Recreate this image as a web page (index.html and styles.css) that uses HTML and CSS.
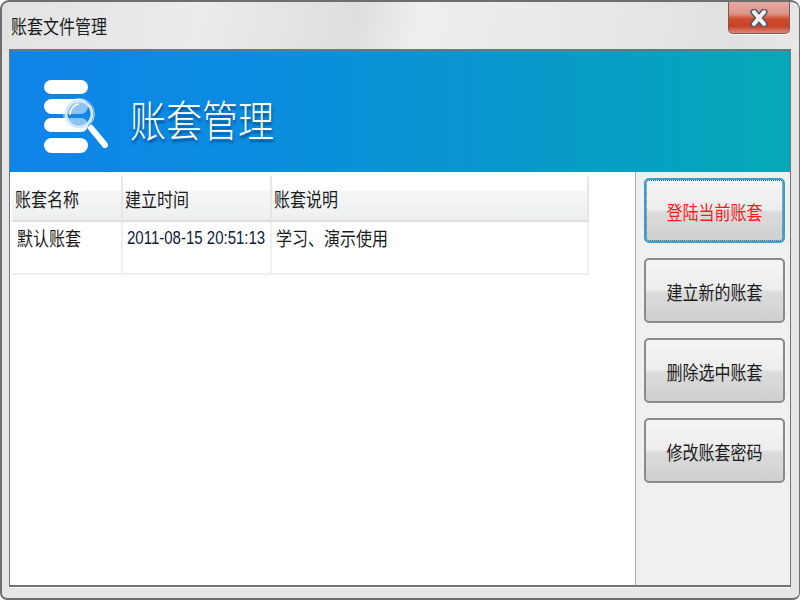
FILE: index.html
```html
<!DOCTYPE html>
<html lang="zh-CN">
<head>
<meta charset="utf-8">
<title>账套文件管理</title>
<link rel="stylesheet" href="styles.css">
</head>
<body>
<div class="window">
  <div class="titlebar">
    <span class="title t">账套文件管理</span>
    <div class="close">
      <svg width="20" height="18" viewBox="0 0 20 18" aria-hidden="true">
        <path class="x-out" d="M5 3 L15 15 M15 3 L5 15"/>
        <path class="x-in" d="M5 3 L15 15 M15 3 L5 15"/>
      </svg>
    </div>
  </div>
  <div class="client">
    <div class="banner">
      <svg class="logo" width="68" height="76" viewBox="0 0 68 76" aria-hidden="true">
        <rect class="bar" x="0" y="1" width="44" height="14" rx="7"/>
        <rect class="bar" x="0" y="20" width="44" height="15" rx="7.5"/>
        <rect class="bar" x="0" y="39" width="44" height="14" rx="7"/>
        <rect class="bar" x="0" y="59" width="44" height="15" rx="7.5"/>
        <circle class="lens-halo" cx="35" cy="35" r="15.5"/>
        <circle class="lens-fill" cx="35" cy="35" r="13"/>
        <circle class="lens-ring" cx="35" cy="35" r="13"/>
        <path class="lens-arc" d="M26 36 A9.5 11 0 0 1 35 25"/>
        <path class="handle" d="M47 49 L61 66"/>
      </svg>
      <h1 class="banner-title t">账套管理</h1>
    </div>
    <div class="body">
      <div class="list">
        <div class="grid">
          <div class="head"><span class="t">账套名称</span></div>
          <div class="head"><span class="t">建立时间</span></div>
          <div class="head"><span class="t">账套说明</span></div>
          <div class="cell"><span class="t">默认账套</span></div>
          <div class="cell date"><span class="t">2011-08-15 20:51:13</span></div>
          <div class="cell"><span class="t">学习、演示使用</span></div>
        </div>
      </div>
      <div class="side">
        <button class="btn focus"><span class="t">登陆当前账套</span></button>
        <button class="btn"><span class="t">建立新的账套</span></button>
        <button class="btn"><span class="t">删除选中账套</span></button>
        <button class="btn"><span class="t">修改账套密码</span></button>
      </div>
    </div>
  </div>
</div>
</body>
</html>
```
FILE: styles.css
```css
* { box-sizing: border-box; }
html, body { margin: 0; padding: 0; background: #fff; }
body { font-family: "Noto Sans CJK SC", "Liberation Sans", sans-serif; color: #1c1c1c; }

/* The reference is stretched vertically; text follows that stretch. */
.t { display: inline-block; transform: scaleY(1.2); transform-origin: center; }

.window {
  width: 800px;
  height: 600px;
  display: flex;
  flex-direction: column;
  padding: 0 8px 11px 7px;
  border: 2px solid #6e6e6e;
  border-width: 2px 1px 2px 2px;
  border-radius: 9px 9px 7px 7px;
  background:
    linear-gradient(100deg, #e2e2e2 0%, #ececec 25%, #dedede 44%, #eeeeee 52%, #e8e8e8 75%, #e0e0e0 92%, #e8e8e8 100%) top / 100% 50px no-repeat,
    #e6e6e6;
  overflow: hidden;
}

.titlebar {
  height: 47px;
  flex: none;
  display: flex;
  justify-content: space-between;
  align-items: flex-start;
}
.title {
  font-size: 16px;
  line-height: 24px;
  margin-top: 12px;
  margin-left: 2px;
  color: #1c1c1c;
}
.close {
  width: 62px;
  height: 32px;
  margin-right: 1px;
  display: flex;
  align-items: center;
  justify-content: center;
  background: linear-gradient(#e9aaa4 0%, #dc9388 38%, #cf4a2a 55%, #c9422a 78%, #d98a78 100%);
  border: 1px solid #7a5a58;
  border-top: none;
  border-radius: 0 0 5px 5px;
  box-shadow: 0 1px 0 #f6f6f6;
}
.x-out { fill: none; stroke: #4f5a6c; stroke-width: 7; stroke-linecap: round; }
.x-in { fill: none; stroke: #f2f2f2; stroke-width: 4; stroke-linecap: round; }

.client {
  flex: 1;
  min-height: 0;
  display: flex;
  flex-direction: column;
  border: 1px solid #6f7678;
  border-width: 2px 1px 2px 1px;
  background: #f0f0f0;
  box-shadow: 0 1px 0 #fafafa;
}

.banner {
  height: 121px;
  flex: none;
  display: flex;
  align-items: center;
  padding-left: 34px;
  gap: 18px;
  background: linear-gradient(90deg, #0f84e8 0%, #0b8ce0 30%, #0898cc 65%, #06a8b8 100%);
}
.logo { flex: none; margin-top: 11px; }
.bar { fill: #fff; }
.lens-halo { fill: none; stroke: #fff; stroke-opacity: 0.55; stroke-width: 1; }
.lens-fill { fill: #1a88e8; fill-opacity: 0.5; }
.lens-ring { fill: none; stroke: #d4e9fb; stroke-width: 3; }
.lens-arc { fill: none; stroke: #fff; stroke-width: 1.5; }
.handle { stroke: #fff; stroke-width: 6; stroke-linecap: round; }
.banner-title {
  margin: 13px 0 0;
  font-size: 36px;
  font-weight: 300;
  line-height: 50px;
  color: #fff;
  text-shadow: 1px 2px 2px rgba(0, 40, 90, 0.55);
}

.body {
  flex: 1;
  min-height: 0;
  display: flex;
}
.list {
  flex: 1;
  min-width: 0;
  background: #fff;
  border-right: 1px solid #a8a8a8;
  padding: 4px 0 0 2px;
}
.grid {
  display: grid;
  grid-template-columns: 111px 149px 317px;
  grid-template-rows: 46px 53px;
  width: 577px;
}
.head {
  font-size: 16px;
  line-height: 24px;
  padding: 11px 0 0 3px;
  background: linear-gradient(#fff 0, #fff 14px, #f6f6f6 15px, #eceff1 100%);
  border-right: 2px solid #e6e6e6;
  border-bottom: 2px solid #dedede;
}
.head:nth-child(2), .head:nth-child(3) { padding-left: 2px; }
.cell {
  font-size: 16px;
  line-height: 24px;
  padding: 4px 0 0 5px;
  border-right: 2px solid #efefef;
  border-bottom: 2px solid #efefef;
  color: #1c1c1c;
}
.cell:nth-child(6) { padding-left: 4px; }
.cell.date {
  font-family: "Liberation Sans", sans-serif;
  font-size: 15px;
  padding-left: 4px;
  padding-top: 4px;
  color: #10203a;
}

.side {
  width: 154px;
  flex: none;
  display: flex;
  flex-direction: column;
  gap: 15px;
  padding: 6px 4px 0 8px;
}
.btn {
  height: 65px;
  width: 141px;
  flex: none;
  padding: 2px 0 0;
  font-family: inherit;
  font-size: 16px;
  color: #1c1c1c;
  border: 2px solid #8a8a8a;
  border-radius: 5px;
  background: linear-gradient(#f5f5f5 0%, #ededed 48%, #dcdcdc 52%, #cfcfcf 100%);
}
.btn.focus {
  color: #ff1a1a;
  border-color: #3a9fd0;
  outline: 1px dotted #0f6f80;
  outline-offset: -3px;
}
```
